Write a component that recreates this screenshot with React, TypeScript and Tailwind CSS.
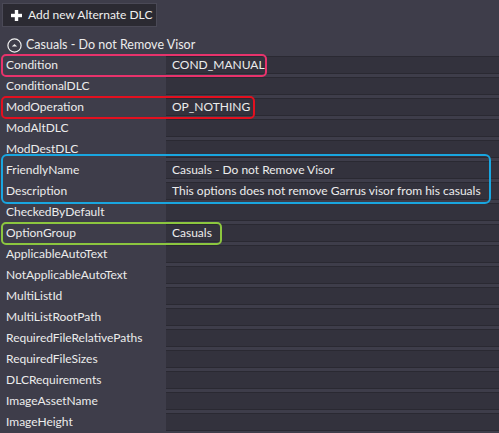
import React from "react";

const rows: { label: string; value?: string }[] = [
  { label: "Condition", value: "COND_MANUAL" },
  { label: "ConditionalDLC" },
  { label: "ModOperation", value: "OP_NOTHING" },
  { label: "ModAltDLC" },
  { label: "ModDestDLC" },
  { label: "FriendlyName", value: "Casuals - Do not Remove Visor" },
  { label: "Description", value: "This options does not remove Garrus visor from his casuals" },
  { label: "CheckedByDefault" },
  { label: "OptionGroup", value: "Casuals" },
  { label: "ApplicableAutoText" },
  { label: "NotApplicableAutoText" },
  { label: "MultiListId" },
  { label: "MultiListRootPath" },
  { label: "RequiredFileRelativePaths" },
  { label: "RequiredFileSizes" },
  { label: "DLCRequirements" },
  { label: "ImageAssetName" },
  { label: "ImageHeight" },
];

export default function App() {
  return (
    <div
      className="relative w-[499px] h-[433px] overflow-hidden bg-[#3e3d4a] text-[#ececec] text-[12px]"
      style={{ fontFamily: "Lato, 'Noto Sans', sans-serif" }}
    >
      <div className="pt-[3px] pl-[2px]">
        <button className="flex items-center gap-[6px] h-[24px] w-[155px] pl-[8px] bg-[#2b2a32] border border-[#4a4956] text-[#f0f0f0] text-[12px]">
          <svg width="11" height="11" viewBox="0 0 11 11">
            <rect x="3.8" y="0" width="3.4" height="11" fill="#ffffff" />
            <rect x="0" y="3.8" width="11" height="3.4" fill="#ffffff" />
          </svg>
          <span>Add new Alternate DLC</span>
        </button>
      </div>
      <div className="flex items-center h-[20px] mt-[8px] pl-[7px] gap-[4px] text-[12.5px]">
        <svg width="15" height="15" viewBox="0 0 15 15">
          <circle cx="7.5" cy="7.5" r="6.6" fill="none" stroke="#f0f0f0" strokeWidth="1.2" />
          <path d="M4.8 8.6 L7.5 5.9 L10.2 8.6 Z" fill="#f0f0f0" />
        </svg>
        <span>Casuals - Do not Remove Visor</span>
      </div>
      <div className="flex flex-col">
        {rows.map((r) => (
          <div key={r.label} className="flex h-[21px]">
            <div className="w-[166px] shrink-0 pl-[6px] leading-[20px]">{r.label}</div>
            <div className="flex-1 mt-[1px] h-[18px] bg-[#33323d] border-y border-[#2a2932] pl-[6px] leading-[16px]">
              {r.value}
            </div>
          </div>
        ))}
      </div>
      <div className="absolute left-[1px] top-[54px] w-[266px] h-[23px] rounded-[5px] border-[2.5px] border-[#e8336c]" />
      <div className="absolute left-[1px] top-[96px] w-[254px] h-[23px] rounded-[5px] border-[2.5px] border-[#e3101f]" />
      <div className="absolute left-[1px] top-[154px] w-[490px] h-[50px] rounded-[6px] border-[2.5px] border-[#19a6e0]" />
      <div className="absolute left-[1px] top-[222px] w-[221px] h-[23px] rounded-[5px] border-[2.5px] border-[#8cc63f]" />
    </div>
  );
}
